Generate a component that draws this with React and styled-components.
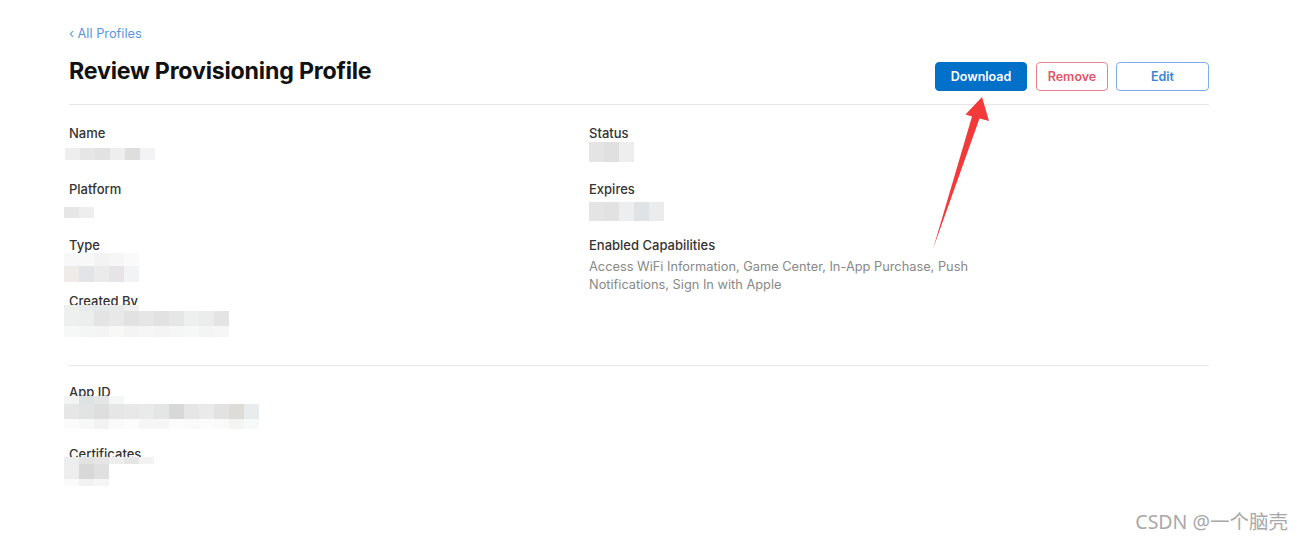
import React from 'react';
import styled, { createGlobalStyle } from 'styled-components';

const Global = createGlobalStyle`
  html, body {
    margin: 0;
    padding: 0;
    background: #fff;
  }
  body {
    font-family: Inter, "Noto Sans", "Liberation Sans", sans-serif;
    color: #1d1d1f;
  }
`;

const Page = styled.div`
  position: relative;
  width: 1302px;
  height: 542px;
  overflow: hidden;
`;

const Content = styled.div`
  width: 1140px;
  padding: 27px 0 0 69px;
`;

const BackLink = styled.a`
  display: block;
  font-size: 12.8px;
  line-height: 14px;
  color: #5a96dd;
  text-decoration: none;
  cursor: pointer;
`;

const Header = styled.div`
  display: flex;
  justify-content: space-between;
  align-items: flex-start;
  padding-top: 17px;
  padding-bottom: 13px;
  border-bottom: 1px solid #e6e6e6;
`;

const Title = styled.h1`
  margin: 0;
  font-size: 23.2px;
  line-height: 26px;
  font-weight: 700;
  letter-spacing: -0.2px;
  color: #111;
`;

const Actions = styled.div`
  display: flex;
  margin-top: 4px;
`;

const Button = styled.button`
  height: 29px;
  width: ${p => p.$w}px;
  margin-left: ${p => p.$gap || 0}px;
  border-radius: 4px;
  font-family: inherit;
  font-size: 12.5px;
  font-weight: 600;
  cursor: pointer;
  background: ${p => (p.$primary ? '#0070c9' : '#fff')};
  color: ${p => p.$color};
  border: 1px solid ${p => p.$border};
`;

const Section = styled.div`
  display: flex;
  padding: ${p => p.$pad};
  border-bottom: ${p => (p.$line ? '1px solid #e6e6e6' : 'none')};
`;

const Column = styled.div`
  display: flex;
  flex-direction: column;
  width: ${p => p.$w || 'auto'};
`;

const Field = styled.div`
  height: ${p => p.$h || 56}px;
`;

const Label = styled.div`
  font-size: 13px;
  line-height: 16px;
  font-weight: 500;
  color: #333;
`;

const Text = styled.div`
  margin-top: 5px;
  width: 396px;
  font-size: 12.8px;
  line-height: 18px;
  color: #888;
`;

const MosaicBox = styled.div`
  display: flex;
  flex-direction: column;
  margin-top: ${p => p.$top}px;
  margin-left: ${p => p.$left || 0}px;
`;

const MosaicRow = styled.div`
  display: flex;
  height: ${p => p.$h}px;
`;

const Cell = styled.div`
  width: 15px;
  height: 100%;
  background: ${p => p.$c};
`;

const Watermark = styled.div`
  position: absolute;
  right: 14px;
  bottom: 7px;
  font-family: "Noto Sans", "Noto Sans CJK SC", sans-serif;
  font-size: 19.5px;
  color: #a8a8a8;
`;

const Arrow = styled.svg`
  position: absolute;
  left: 0;
  top: 0;
  pointer-events: none;
`;

function Mosaic({ top, left, rows }) {
  return (
    <MosaicBox $top={top} $left={left}>
      {rows.map((r, i) => (
        <MosaicRow key={i} $h={r.h}>
          {r.c.map((c, j) => (
            <Cell key={j} $c={c} />
          ))}
        </MosaicRow>
      ))}
    </MosaicBox>
  );
}

const blur = {
  name: [{ h: 12, c: ['#eeeeee', '#e6e6e6', '#e2e2e2', '#eeeeee', '#dedede', '#f3f3f5'] }],
  platform: [{ h: 11, c: ['#e6e6e6', '#eeeeee'] }],
  type: [
    { h: 13, c: ['#f8f8f8', '#f8f8f8', '#f3f3f3', '#f6f6f6', '#fafafa'] },
    { h: 16, c: ['#efebe8', '#e2e4e8', '#ebebeb', '#e6e4e6', '#f2f3f5'] },
  ],
  created: [
    { h: 6, c: ['#eef0f0', '#e6eaea', '#e4e8e8', '#e8eaea', '#eef0f0'] },
    { h: 15, c: ['#eef0f0', '#eceeee', '#e4e4e4', '#e8e8e8', '#e2e2e2', '#e6e6e6', '#e2e2e2', '#e6e6e6', '#eef0f0', '#ececec', '#e4e4e4'] },
    { h: 11, c: ['#f6f7f7', '#f4f6f6', '#f4f4f4', '#f8f8f6', '#f4f4f4', '#f6f6f6', '#f4f4f4', '#f6f6f6', '#f6f7f7', '#f4f4f4', '#f6f6f6'] },
  ],
  status: [{ h: 20, c: ['#e4e4e4', '#e0e0e0', '#eeeeee'] }],
  expires: [{ h: 19, c: ['#e4e4e4', '#e2e2e2', '#eeeeee', '#dfe3e6', '#ececec'] }],
  appid: [
    { h: 8, c: ['#f2f4f4', '#dde2e4', '#e4e6e6', '#f4f6f8', '#ffffff'] },
    { h: 15, c: ['#e6e6e6', '#e2e4e4', '#dedede', '#e6e6e6', '#e8e8e8', '#eaeaea', '#e4e6e6', '#d8d8d8', '#e6e6e6', '#eaeaea', '#e2e2e2', '#dedcd8', '#e8ecec'] },
    { h: 10, c: ['#fbfbfb', '#f8f8f8', '#f2f2f2', '#fafafa', '#fcfcfc', '#f6f6f6', '#f6f6f6', '#fcfcfc', '#fafafa', '#fcfcfc', '#fafafa', '#f4f4f2', '#f8fafa'] },
  ],
  certs: [
    { h: 7, c: ['#eceeee', '#e2e4e4', '#e6e6e6', '#eeeeee', '#e6e6e6', '#f2f2f2'] },
    { h: 15, c: ['#eeeeee', '#d8d8d8', '#e0e0e0'] },
    { h: 7, c: ['#fafafa', '#f2f2f2', '#f6f6f6'] },
  ],
};

export default function App() {
  return (
    <Page>
      <Global />
      <Content>
        <BackLink>‹ All Profiles</BackLink>
        <Header>
          <Title>Review Provisioning Profile</Title>
          <Actions>
            <Button $primary $w={92} $color="#fff" $border="#0070c9">Download</Button>
            <Button $gap={9} $w={72} $color="#e0566a" $border="#e8828e">Remove</Button>
            <Button $gap={8} $w={93} $color="#3b83d3" $border="#7ab0e4">Edit</Button>
          </Actions>
        </Header>

        <Section $line $pad="20px 0 16px">
          <Column $w="520px">
            <Field>
              <Label>Name</Label>
              <Mosaic top={7} left={-4} rows={blur.name} />
            </Field>
            <Field>
              <Label>Platform</Label>
              <Mosaic top={10} left={-5} rows={blur.platform} />
            </Field>
            <Field>
              <Label>Type</Label>
              <Mosaic top={0} left={-5} rows={blur.type} />
            </Field>
            <Field>
              <Label>Created By</Label>
              <Mosaic top={-4} left={-5} rows={blur.created} />
            </Field>
          </Column>
          <Column>
            <Field>
              <Label>Status</Label>
              <Mosaic top={1} rows={blur.status} />
            </Field>
            <Field>
              <Label>Expires</Label>
              <Mosaic top={5} rows={blur.expires} />
            </Field>
            <Field>
              <Label>Enabled Capabilities</Label>
              <Text>
                Access WiFi Information, Game Center, In-App Purchase, Push Notifications, Sign In with Apple
              </Text>
            </Field>
          </Column>
        </Section>

        <Section $pad="18px 0 0">
          <Column>
            <Field $h={62}>
              <Label>App ID</Label>
              <Mosaic top={-4} left={-5} rows={blur.appid} />
            </Field>
            <Field>
              <Label>Certificates</Label>
              <Mosaic top={-5} left={-5} rows={blur.certs} />
            </Field>
          </Column>
        </Section>
      </Content>

      <Arrow width="1302" height="542" viewBox="0 0 1302 542">
        <polygon
          points="982,97 989,121 979.5,118.5 933,249 972,116.5 965.5,114.5"
          fill="#f23a3a"
        />
      </Arrow>

      <Watermark>CSDN @一个脑壳</Watermark>
    </Page>
  );
}
